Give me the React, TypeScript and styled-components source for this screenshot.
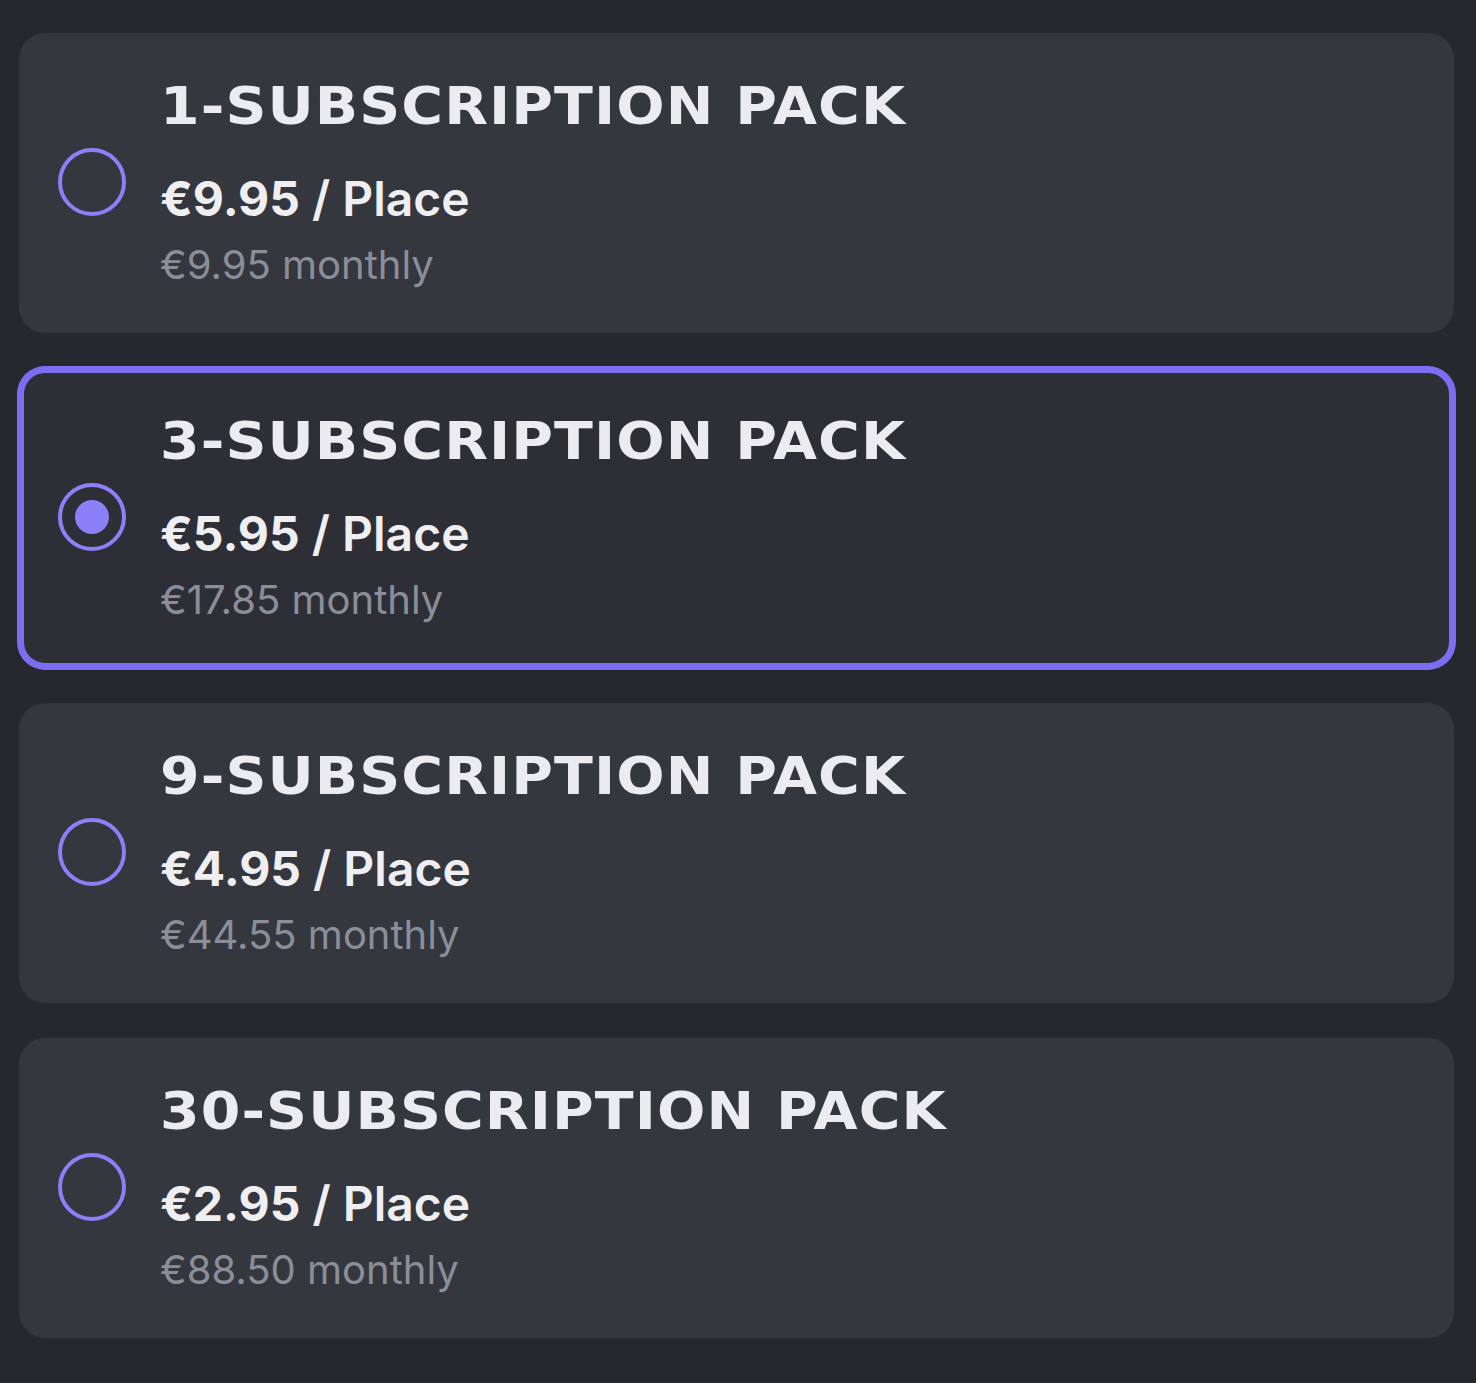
import styled, { createGlobalStyle } from "styled-components";
import { useState } from "react";

const GlobalStyle = createGlobalStyle`
  html, body {
    margin: 0;
    padding: 0;
    background: #27282d;
  }
  * {
    box-sizing: border-box;
  }
`;

const Page = styled.div`
  min-height: 1383px;
  padding: 33px 22px 40px 19px;
  background: #27282d;
  display: flex;
  flex-direction: column;
  gap: 35px;
  font-family: Inter, "Noto Sans", sans-serif;
`;

const Card = styled.label<{ $selected: boolean }>`
  display: flex;
  align-items: center;
  gap: 34px;
  height: 300px;
  padding: 0 34px;
  border-radius: 26px;
  border: 5px solid ${(p) => (p.$selected ? "#7b6ef3" : "transparent")};
  box-shadow: ${(p) => (p.$selected ? "0 0 0 2px #7b6ef3" : "none")};
  background: ${(p) => (p.$selected ? "#2e2f36" : "#35373f")};
  cursor: pointer;
`;

const Radio = styled.span<{ $checked: boolean }>`
  flex: none;
  width: 68px;
  height: 68px;
  border-radius: 50%;
  border: 4px solid #8b80f8;
  display: flex;
  align-items: center;
  justify-content: center;
  margin-top: -2px;

  &::after {
    content: "";
    display: ${(p) => (p.$checked ? "block" : "none")};
    width: 34px;
    height: 34px;
    border-radius: 50%;
    background: #8b80f8;
  }
`;

const HiddenInput = styled.input`
  position: absolute;
  opacity: 0;
  pointer-events: none;
`;

const Info = styled.div`
  display: flex;
  flex-direction: column;
  align-items: flex-start;
`;

// wide display face isn't installed, so stretch DejaVu a bit
const Title = styled.div`
  font-family: "DejaVu Sans", Verdana, sans-serif;
  font-weight: 700;
  font-size: 51px;
  line-height: 60px;
  letter-spacing: 1px;
  color: #ececf0;
  text-transform: uppercase;
  white-space: nowrap;
  transform: scaleX(1.115);
  transform-origin: left center;
`;

const Price = styled.div`
  margin-top: 33px;
  font-size: 48px;
  line-height: 58px;
  font-weight: 600;
  color: #efeff2;
`;

const Amount = styled.span`
  font-weight: 700;
`;

const Monthly = styled.div`
  margin-top: 13px;
  font-size: 40px;
  line-height: 48px;
  font-weight: 400;
  color: #8a8e98;
`;

const packs = [
  { count: 1, price: "€9.95", monthly: "€9.95" },
  { count: 3, price: "€5.95", monthly: "€17.85" },
  { count: 9, price: "€4.95", monthly: "€44.55" },
  { count: 30, price: "€2.95", monthly: "€88.50" },
];

export default function App() {
  const [selected, setSelected] = useState(3);

  return (
    <>
      <GlobalStyle />
      <Page>
        {packs.map((pack) => {
          const isSelected = pack.count === selected;
          return (
            <Card key={pack.count} $selected={isSelected}>
              <HiddenInput
                type="radio"
                name="pack"
                checked={isSelected}
                onChange={() => setSelected(pack.count)}
              />
              <Radio $checked={isSelected} />
              <Info>
                <Title>{pack.count}-Subscription Pack</Title>
                <Price>
                  <Amount>{pack.price}</Amount> / Place
                </Price>
                <Monthly>{pack.monthly} monthly</Monthly>
              </Info>
            </Card>
          );
        })}
      </Page>
    </>
  );
}
